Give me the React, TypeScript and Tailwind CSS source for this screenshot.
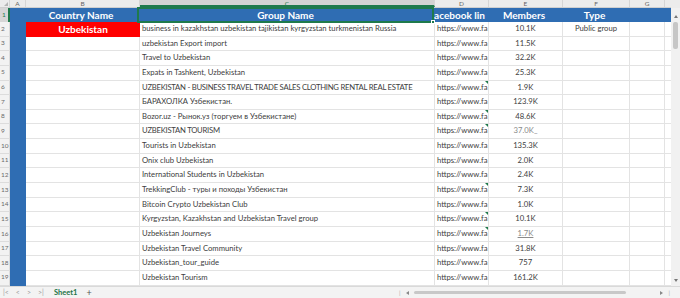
import React from "react";

type Row = { g: string; m: string; mark?: boolean; mStyle?: "under" | "light" };

const rows: Row[] = [
  { g: "business in kazakhstan uzbekistan tajikistan kyrgyzstan turkmenistan Russia", m: "10.1K" },
  { g: "uzbekistan Export import", m: "11.5K" },
  { g: "Travel to Uzbekistan", m: "32.2K" },
  { g: "Expats in Tashkent, Uzbekistan", m: "25.3K" },
  { g: "UZBEKISTAN - BUSINESS TRAVEL TRADE SALES CLOTHING RENTAL REAL ESTATE", m: "1.9K", mark: true },
  { g: "БАРАХОЛКА Узбекистан.", m: "123.9K" },
  { g: "Bozor.uz - Рынок.уз (торгуем в Узбекистане)", m: "48.6K", mark: true },
  { g: "UZBEKISTAN TOURISM", m: "37.0K_", mark: true, mStyle: "light" },
  { g: "Tourists in Uzbekistan", m: "135.3K" },
  { g: "Onix club Uzbekistan", m: "2.0K" },
  { g: "International Students in Uzbekistan", m: "2.4K" },
  { g: "TrekkingClub - туры и походы Узбекистан", m: "7.3K", mark: true },
  { g: "Bitcoin Crypto Uzbekistan Club", m: "1.0K" },
  { g: "Kyrgyzstan, Kazakhstan and Uzbekistan Travel group", m: "10.1K", mark: true },
  { g: "Uzbekistan Journeys", m: "1.7K", mark: true, mStyle: "under" },
  { g: "Uzbekistan Travel Community", m: "31.8K" },
  { g: "Uzbekistan_tour_guide", m: "757" },
  { g: "Uzbekistan Tourism", m: "161.2K" },
];

const font = { fontFamily: "Lato, 'Noto Sans', 'Liberation Sans', sans-serif" };

function ColHead({ w, label, active }: { w: string; label: string; active?: boolean }) {
  return (
    <div
      className={`${w} shrink-0 h-full flex justify-center items-start overflow-hidden border-r border-[#d6d6d6] ${
        active ? "bg-[#d3d3d3] border-b-2 border-b-[#1f7a4c] text-[#1f7a4c]" : "bg-[#ececec] text-[#666]"
      }`}
    >
      <span className="text-[6.5px] leading-[7px]">{label}</span>
    </div>
  );
}

export default function App() {
  return (
    <div className="w-[680px] h-[298px] overflow-hidden bg-white flex flex-col text-[#404040]" style={font}>
      <div className="flex flex-1 min-h-0">
        {/* grid */}
        <div className="w-[671px] flex flex-col">
          {/* column header */}
          <div className="h-[8px] flex border-b border-[#cfcfcf]">
            <div className="w-[10px] shrink-0 h-full bg-[#ececec] border-r border-[#d6d6d6] flex justify-end items-end pr-[1px] pb-[1px]">
              <div className="w-0 h-0 border-b-[4px] border-l-[4px] border-b-[#b5b5b5] border-l-transparent" />
            </div>
            <ColHead w="w-[16px]" label="A" />
            <ColHead w="w-[114px]" label="B" />
            <ColHead w="w-[295px]" label="C" active />
            <ColHead w="w-[54px]" label="D" />
            <ColHead w="w-[74px]" label="E" />
            <ColHead w="w-[67px]" label="F" />
            <ColHead w="w-[35px]" label="G" />
            <div className="w-[6px] shrink-0 h-full bg-[#ececec]" />
          </div>

          {/* row 1 */}
          <div className="h-[14px] flex">
            <div className="w-[10px] shrink-0 bg-[#d6d6d6] border-r-2 border-[#1f7a4c] text-[6.5px] text-[#1f7a4c] leading-none flex items-center pl-[2px]">
              1
            </div>
            <div className="flex-1 flex bg-[#2f6db3] text-white font-bold text-[10px]">
              <div className="w-[14px] shrink-0" />
              <div className="w-[114px] shrink-0 flex items-center justify-center">Country Name</div>
              <div className="w-[295px] shrink-0 flex items-center justify-center relative outline-2 outline-[#1f7a4c] -outline-offset-1 outline">
                Group Name
                <div className="absolute -right-[2px] -bottom-[2px] w-[4px] h-[4px] bg-[#1f7a4c] border border-white" />
              </div>
              <div className="w-[54px] shrink-0 flex items-center justify-center overflow-hidden whitespace-nowrap">
                <span className="-ml-[1px]">acebook lin</span>
              </div>
              <div className="w-[74px] shrink-0 flex items-center justify-center">Members</div>
              <div className="w-[67px] shrink-0 flex items-center justify-center">Type</div>
              <div className="flex-1" />
            </div>
          </div>

          {/* data rows */}
          {rows.map((r, i) => (
            <div key={i} className="h-[14.65px] flex text-[7.7px] leading-none">
              <div className="w-[10px] shrink-0 bg-[#f2f2f2] border-r border-b border-[#dcdcdc] text-[6.5px] text-[#6a6a6a] flex items-center pl-[1px]">
                {i + 2}
              </div>
              <div className="w-[16px] shrink-0 bg-[#2f6db3]" />
              <div
                className={`w-[114px] shrink-0 flex items-center justify-center ${
                  i === 0 ? "bg-[#ff0000] text-white font-bold text-[10px]" : "border-r border-b border-[#e3e3e3]"
                }`}
              >
                {i === 0 ? "Uzbekistan" : ""}
              </div>
              <div
                className={`w-[295px] shrink-0 flex items-center pl-[2px] border-r border-b border-[#e3e3e3] whitespace-nowrap overflow-hidden ${
                  r.g === r.g.toUpperCase() ? "tracking-[-0.25px]" : ""
                }`}
              >
                {r.g}
              </div>
              <div className="w-[54px] shrink-0 relative flex items-center pl-[2px] border-r border-b border-[#e3e3e3] whitespace-nowrap overflow-hidden">
                https://www.fa
                {r.mark && (
                  <div className="absolute top-0 right-0 w-0 h-0 border-t-[3px] border-l-[3px] border-t-[#1f7a4c] border-l-transparent" />
                )}
              </div>
              <div className="w-[74px] shrink-0 flex items-center justify-center border-r border-b border-[#e3e3e3]">
                <span
                  className={
                    r.mStyle === "light"
                      ? "text-[#8a8a8a]"
                      : r.mStyle === "under"
                      ? "text-[#8a8a8a] underline"
                      : ""
                  }
                >
                  {r.m}
                </span>
              </div>
              <div className="w-[67px] shrink-0 flex items-center justify-center border-r border-b border-[#e3e3e3]">
                {i === 0 ? "Public group" : ""}
              </div>
              <div className="w-[35px] shrink-0 border-r border-b border-[#e3e3e3]" />
              <div className="w-[6px] shrink-0 border-b border-[#e3e3e3]" />
            </div>
          ))}
        </div>

        {/* vertical scrollbar */}
        <div className="w-[9px] bg-[#f1f1f1] flex flex-col items-center">
          <div className="h-[8px] w-full bg-[#ececec]" />
          <div className="mt-[7px] w-0 h-0 border-l-[2px] border-r-[2px] border-b-[3px] border-l-transparent border-r-transparent border-b-[#777]" />
          <div className="mt-[4px] w-[5px] h-[27px] rounded-[2px] bg-[#c6c6c6]" />
          <div className="flex-1" />
          <div className="mb-[4px] w-0 h-0 border-l-[2px] border-r-[2px] border-t-[3px] border-l-transparent border-r-transparent border-t-[#777]" />
        </div>
      </div>

      {/* tab bar */}
      <div className="h-[12px] shrink-0 bg-[#f3f3f3] border-t border-[#d9d9d9] flex items-center text-[#9a9a9a] text-[7px] leading-none">
        <div className="flex items-center gap-[7px] pl-[3px] w-[48px]">
          <span>|&lt;</span>
          <span>&lt;</span>
          <span>&gt;</span>
          <span>&gt;|</span>
        </div>
        <span className="ml-[6px] text-[#217346] font-bold text-[7.5px]">Sheet1</span>
        <span className="ml-[9px] text-[#555] text-[9px]">+</span>
        <div className="flex-1" />
        <span className="text-[#aaa] text-[6px]">|</span>
        <div className="ml-[6px] w-0 h-0 border-t-[2px] border-b-[2px] border-r-[3px] border-t-transparent border-b-transparent border-r-[#888]" />
        <div className="ml-[5px] w-[212px] h-[3px] rounded-full bg-[#c8c8c8]" />
        <div className="ml-[34px] w-0 h-0 border-t-[2px] border-b-[2px] border-l-[3px] border-t-transparent border-b-transparent border-l-[#888]" />
        <span className="ml-[5px] mr-[10px] text-[#aaa] text-[6px]">|</span>
      </div>
    </div>
  );
}
